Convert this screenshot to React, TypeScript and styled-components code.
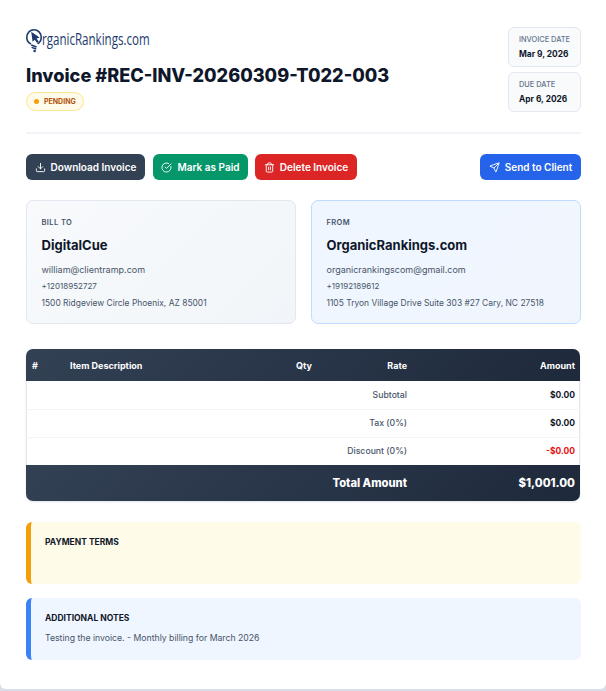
import React from 'react'
import styled, { createGlobalStyle } from 'styled-components'
import { CircleCheckBig, Download, Send, Trash2 } from 'lucide-react'

const GlobalStyle = createGlobalStyle`
  html, body {
    margin: 0;
    padding: 0;
    background: #d9deea;
  }
  body {
    font-family: 'Inter', 'Open Sans', 'Liberation Sans', sans-serif;
    color: #0f172a;
    -webkit-font-smoothing: antialiased;
  }
`

const Page = styled.div`
  box-sizing: border-box;
  width: 606px;
  height: 689px;
  padding: 27px 25px 0 26px;
  background: #fff;
  border-radius: 0 0 6px 6px;
  overflow: hidden;
`

const Header = styled.header`
  display: flex;
  justify-content: space-between;
  align-items: flex-start;
  height: 105px;
  border-bottom: 2px solid #f1f5f9;
  margin-bottom: 20px;
`

const Brand = styled.div`
  display: flex;
  flex-direction: column;
  align-items: flex-start;
`

const Logo = styled.div`
  display: flex;
  align-items: flex-start;
  height: 26px;
  margin-bottom: 10px;
  color: #1c3a6e;
`

const LogoText = styled.span`
  display: inline-block;
  font-family: 'Open Sans', sans-serif;
  font-size: 16.5px;
  line-height: 22px;
  margin-top: 1px;
  transform: scaleX(0.7);
  transform-origin: left center;
  white-space: nowrap;
`

const Title = styled.h1`
  margin: 0 0 4px;
  font-size: 18.15px;
  line-height: 25px;
  font-weight: 800;
  color: #0f172a;
  white-space: nowrap;
`

const Badge = styled.span`
  display: inline-flex;
  align-items: center;
  gap: 5px;
  box-sizing: border-box;
  height: 19px;
  padding: 0 7px;
  border: 1.5px solid #fde68a;
  border-radius: 10px;
  background: #fffbeb;
  color: #b45309;
  font-size: 7px;
  font-weight: 700;
`

const BadgeDot = styled.i`
  width: 5px;
  height: 5px;
  border-radius: 50%;
  background: #f59e0b;
`

const Dates = styled.div`
  display: flex;
  flex-direction: column;
  gap: 5px;
`

const DateBox = styled.div`
  box-sizing: border-box;
  width: 73px;
  height: 40px;
  padding: 7px 0 0 10px;
  border: 1px solid #e2e8f0;
  border-radius: 6px;
  background: #f8fafc;
`

const DateLabel = styled.div`
  font-size: 7.4px;
  line-height: 10px;
  font-weight: 500;
  color: #64748b;
  white-space: nowrap;
`

const DateValue = styled.div`
  margin-top: 3px;
  font-size: 8.4px;
  line-height: 12px;
  font-weight: 700;
  color: #0f172a;
  white-space: nowrap;
`

const Actions = styled.div`
  display: flex;
  align-items: center;
  height: 26px;
  margin-bottom: 20px;
`

const ActionButton = styled.button<{ $bg: string; $width: number; $gap?: number }>`
  display: flex;
  align-items: center;
  justify-content: center;
  gap: 5px;
  box-sizing: border-box;
  width: ${(p) => p.$width}px;
  height: 26px;
  margin-right: ${(p) => p.$gap ?? 0}px;
  padding: 0;
  border: 0;
  border-radius: 6px;
  background: ${(p) => p.$bg};
  color: #fff;
  font-family: inherit;
  font-size: 10px;
  font-weight: 600;
  white-space: nowrap;
`

const Spacer = styled.div`
  flex: 1;
`

const Parties = styled.div`
  display: grid;
  grid-template-columns: 270px 270px;
  column-gap: 15px;
  margin-bottom: 25px;
`

const Party = styled.section<{ $from?: boolean }>`
  box-sizing: border-box;
  height: 124px;
  padding: 17px 15px 0 14.5px;
  border: 1px solid ${(p) => (p.$from ? '#bfdbfe' : '#e2e8f0')};
  border-radius: 7px;
  background: ${(p) =>
    p.$from
      ? 'linear-gradient(135deg, #eff6ff, #f1f6fe)'
      : 'linear-gradient(135deg, #f8fafc, #f1f5f9)'};
`

const PartyLabel = styled.div`
  font-size: 7.5px;
  line-height: 10px;
  font-weight: 600;
  letter-spacing: 0.4px;
  color: #475569;
`

const PartyName = styled.div`
  margin: 8px 0 7px;
  font-size: 13px;
  line-height: 18px;
  font-weight: 700;
  color: #0f172a;
`

const PartyLine = styled.div<{ $size: number }>`
  font-size: ${(p) => p.$size}px;
  line-height: 17px;
  color: #475569;
  white-space: nowrap;
`

const TableWrap = styled.div`
  width: 554px;
  height: 152px;
  margin-bottom: 21px;
  border-radius: 7px;
  overflow: hidden;
  box-shadow: 0 0 0 1px #e2e8f0 inset, 0 1px 2px rgba(15, 23, 42, 0.12);
`

const Table = styled.table`
  width: 100%;
  border-collapse: collapse;
  table-layout: fixed;
`

const HeadRow = styled.tr`
  height: 32px;
  background: linear-gradient(135deg, #334155, #1e293b);
`

const HeadCell = styled.th<{ $right?: boolean }>`
  padding: 0 5px 0 6px;
  font-size: 9px;
  font-weight: 700;
  color: #fff;
  text-align: ${(p) => (p.$right ? 'right' : 'left')};
  white-space: nowrap;
`

const BodyRow = styled.tr`
  height: 28px;
  border-bottom: 1px solid #f1f5f9;
  &:last-child {
    border-bottom: 0;
  }
`

const LabelCell = styled.td`
  padding: 0 5px;
  font-size: 8.7px;
  font-weight: 500;
  color: #475569;
  text-align: right;
`

const ValueCell = styled.td<{ $negative?: boolean }>`
  padding: 0 5px;
  font-size: 8.5px;
  font-weight: 700;
  color: ${(p) => (p.$negative ? '#e60f0f' : '#0f172a')};
  text-align: right;
`

const TotalRow = styled.tr`
  height: 36px;
  background: linear-gradient(135deg, #334155, #1e293b);
`

const TotalLabel = styled.td`
  padding: 0 5px;
  font-size: 11.2px;
  font-weight: 800;
  color: #fff;
  text-align: right;
`

const TotalValue = styled.td`
  padding: 0 5px;
  font-size: 11.4px;
  font-weight: 800;
  color: #fff;
  text-align: right;
`

const Note = styled.section<{ $accent: string; $bg: string; $gap: number }>`
  box-sizing: border-box;
  width: 555px;
  height: 62px;
  margin-bottom: ${(p) => p.$gap}px;
  padding: 14px 15px 0 14px;
  border-left: 5px solid ${(p) => p.$accent};
  border-radius: 6px;
  background: ${(p) => p.$bg};
`

const NoteTitle = styled.h3`
  margin: 0;
  font-size: 8.5px;
  line-height: 12px;
  font-weight: 700;
  color: #0f172a;
`

const NoteText = styled.p`
  margin: 8px 0 0;
  font-size: 8.7px;
  line-height: 12px;
  color: #475569;
`

const LogoMark = () => (
  <svg width="16" height="26" viewBox="0 0 16 26" fill="none">
    <path
      d="M5 17C2.4 15.9 0.8 13.3 0.8 10.2C0.8 5.9 4.1 2.7 8 2.7C11.9 2.7 15.2 5.9 15.2 10.2C15.2 13.2 13.7 15.6 11.6 16.9"
      stroke="#1c3a6e"
      strokeWidth="1.6"
    />
    <path d="M5.2 4.8L13.6 10.6L10.6 11.4L12.8 14.8L11 16L8.8 12.7L6.6 14.8Z" fill="#1c3a6e" />
    <path d="M5.2 18L10.6 20M5.6 20.4L10.2 22" stroke="#1c3a6e" strokeWidth="1.5" />
    <circle cx="8.6" cy="24" r="1.3" fill="#1c3a6e" />
  </svg>
)

const App = () => (
  <>
    <GlobalStyle />
    <Page>
      <Header>
        <Brand>
          <Logo>
            <LogoMark />
            <LogoText>rganicRankings.com</LogoText>
          </Logo>
          <Title>Invoice #REC-INV-20260309-T022-003</Title>
          <Badge>
            <BadgeDot />
            PENDING
          </Badge>
        </Brand>
        <Dates>
          <DateBox>
            <DateLabel>INVOICE DATE</DateLabel>
            <DateValue>Mar 9, 2026</DateValue>
          </DateBox>
          <DateBox>
            <DateLabel>DUE DATE</DateLabel>
            <DateValue>Apr 6, 2026</DateValue>
          </DateBox>
        </Dates>
      </Header>

      <Actions>
        <ActionButton $bg="#334155" $width={119} $gap={8}>
          <Download size={11} />
          Download Invoice
        </ActionButton>
        <ActionButton $bg="#059669" $width={95} $gap={7}>
          <CircleCheckBig size={11} />
          Mark as Paid
        </ActionButton>
        <ActionButton $bg="#dc2626" $width={102}>
          <Trash2 size={11} />
          Delete Invoice
        </ActionButton>
        <Spacer />
        <ActionButton $bg="#2563eb" $width={101}>
          <Send size={11} />
          Send to Client
        </ActionButton>
      </Actions>

      <Parties>
        <Party>
          <PartyLabel>BILL TO</PartyLabel>
          <PartyName>DigitalCue</PartyName>
          <PartyLine $size={9}>william@clientramp.com</PartyLine>
          <PartyLine $size={8}>+12018952727</PartyLine>
          <PartyLine $size={8.45}>1500 Ridgeview Circle Phoenix, AZ 85001</PartyLine>
        </Party>
        <Party $from>
          <PartyLabel>FROM</PartyLabel>
          <PartyName>OrganicRankings.com</PartyName>
          <PartyLine $size={9}>organicrankingscom@gmail.com</PartyLine>
          <PartyLine $size={8}>+19192189612</PartyLine>
          <PartyLine $size={8.45}>1105 Tryon Village Drive Suite 303 #27 Cary, NC 27518</PartyLine>
        </Party>
      </Parties>

      <TableWrap>
        <Table>
          <colgroup>
            <col width="38" />
            <col width="158" />
            <col width="95" />
            <col width="95" />
            <col width="168" />
          </colgroup>
          <thead>
            <HeadRow>
              <HeadCell>#</HeadCell>
              <HeadCell>Item Description</HeadCell>
              <HeadCell $right>Qty</HeadCell>
              <HeadCell $right>Rate</HeadCell>
              <HeadCell $right>Amount</HeadCell>
            </HeadRow>
          </thead>
          <tbody>
            <BodyRow>
              <LabelCell colSpan={4}>Subtotal</LabelCell>
              <ValueCell>$0.00</ValueCell>
            </BodyRow>
            <BodyRow>
              <LabelCell colSpan={4}>Tax (0%)</LabelCell>
              <ValueCell>$0.00</ValueCell>
            </BodyRow>
            <BodyRow>
              <LabelCell colSpan={4}>Discount (0%)</LabelCell>
              <ValueCell $negative>-$0.00</ValueCell>
            </BodyRow>
          </tbody>
          <tfoot>
            <TotalRow>
              <TotalLabel colSpan={4}>Total Amount</TotalLabel>
              <TotalValue>$1,001.00</TotalValue>
            </TotalRow>
          </tfoot>
        </Table>
      </TableWrap>

      <Note $accent="#f59e0b" $bg="#fefbe9" $gap={14}>
        <NoteTitle>PAYMENT TERMS</NoteTitle>
      </Note>
      <Note $accent="#3b82f6" $bg="#eff6ff" $gap={0}>
        <NoteTitle>ADDITIONAL NOTES</NoteTitle>
        <NoteText>Testing the invoice. - Monthly billing for March 2026</NoteText>
      </Note>
    </Page>
  </>
)

export default App
